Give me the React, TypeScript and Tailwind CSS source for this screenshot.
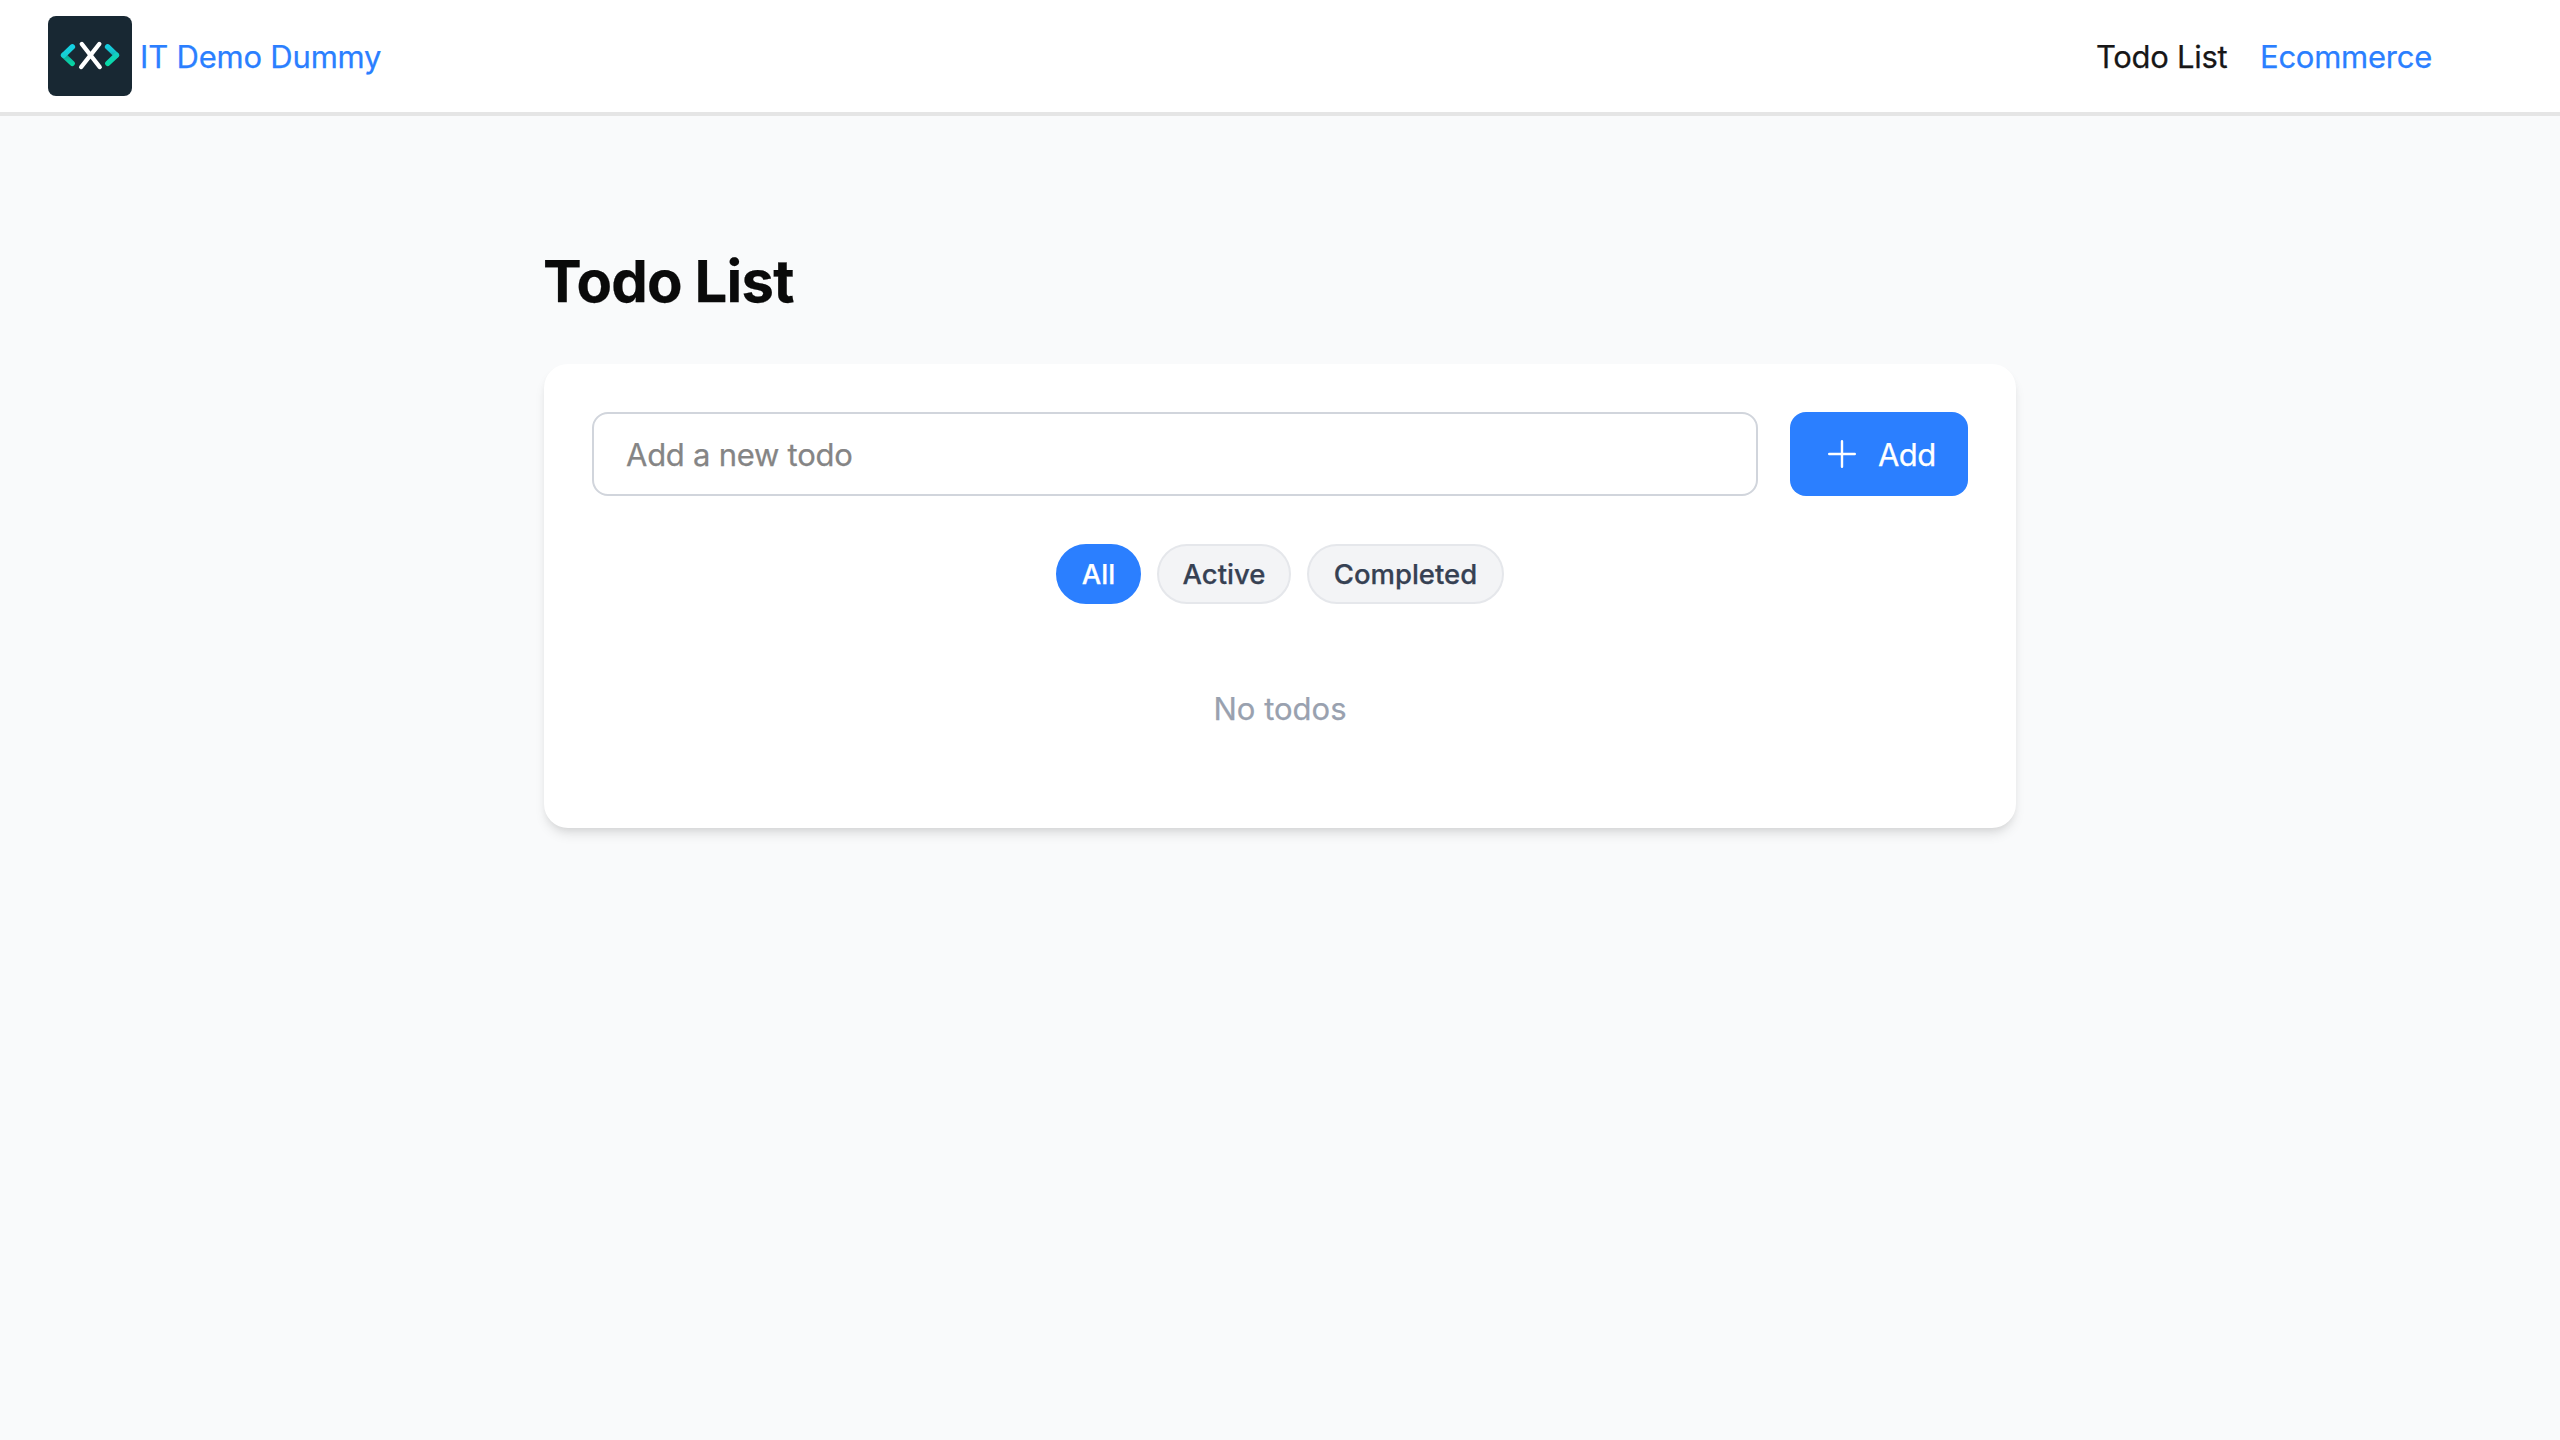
import { useState } from "react";

function Logo() {
  return (
    <svg width="84" height="80" viewBox="0 0 84 80" fill="none" strokeLinecap="round" strokeLinejoin="round">
      <defs>
        <linearGradient id="arrowLower" x1="0" y1="38" x2="0" y2="50" gradientUnits="userSpaceOnUse">
          <stop offset="0" stopColor="#0c9d96" />
          <stop offset="0.5" stopColor="#0bc3a4" />
          <stop offset="1" stopColor="#06dba2" />
        </linearGradient>
        <linearGradient id="arrowLowerRight" x1="0" y1="38" x2="0" y2="50" gradientUnits="userSpaceOnUse">
          <stop offset="0" stopColor="#14cfc0" />
          <stop offset="1" stopColor="#06dba2" />
        </linearGradient>
        <linearGradient id="arrowUpper" x1="0" y1="28" x2="0" y2="42" gradientUnits="userSpaceOnUse">
          <stop offset="0" stopColor="#14d0e6" />
          <stop offset="1" stopColor="#17cfcf" />
        </linearGradient>
        <linearGradient id="arrowUpperRight" x1="0" y1="28" x2="0" y2="42" gradientUnits="userSpaceOnUse">
          <stop offset="0" stopColor="#14d0e6" />
          <stop offset="0.5" stopColor="#14c4cf" />
          <stop offset="1" stopColor="#0f9fa3" />
        </linearGradient>
      </defs>
      <rect width="84" height="80" rx="8" fill="#182833" />
      <path d="M15.6 39.2 24.2 47.4" stroke="url(#arrowLower)" strokeWidth="5.4" />
      <path d="M24.4 30.8 15.6 39.2" stroke="url(#arrowUpper)" strokeWidth="5.4" />
      <path d="M59.6 30.8 68.4 39.2" stroke="url(#arrowUpperRight)" strokeWidth="5.4" />
      <path d="M68.4 39.2 59.8 47.4" stroke="url(#arrowLowerRight)" strokeWidth="5.4" />
      <path d="M33.8 28 51.7 51M51.3 28 33.2 51" stroke="#fff" strokeWidth="4.4" />
    </svg>
  );
}

const filters = [
  { label: "All", width: "w-[85px]" },
  { label: "Active", width: "w-[134px]" },
  { label: "Completed", width: "w-[197px]" },
];

export default function App() {
  const [filter, setFilter] = useState("All");
  return (
    <div className="min-h-screen bg-gray-50 font-['Inter',sans-serif] text-[31px] leading-[48px] text-[#0a0a0a] [-webkit-text-stroke:0.25px_currentColor]">
      <nav className="flex h-[116px] items-center justify-between border-b-4 border-[#e5e5e5] bg-white pr-32 pl-12">
        <a href="#" className="flex items-center gap-2 text-[#2b7fff]">
          <Logo />
          <span className="pt-0.5 tracking-[-0.2px]">IT Demo Dummy</span>
        </a>
        <div className="flex gap-8 pt-0.5">
          <a href="#" className="w-[132px] tracking-[-0.3px] whitespace-nowrap text-[#171717]">Todo List</a>
          <a href="#" className="w-[172px] tracking-[-0.25px] text-[#2b7fff]">Ecommerce</a>
        </div>
      </nav>

      <main className="mx-auto w-[1472px] pt-[129px]">
        <h1 className="mb-[47px] -ml-px text-[58px] leading-[72px] font-bold tracking-[-0.8px]">Todo List</h1>
        <section className="flex h-[464px] flex-col rounded-3xl bg-white p-12 shadow-[0_8px_12px_-2px_rgba(0,0,0,0.1),0_4px_8px_-4px_rgba(0,0,0,0.1)]">
          <div className="flex gap-8">
            <input
              type="text"
              placeholder="Add a new todo"
              className="h-[84px] min-w-0 flex-1 rounded-2xl border-2 border-gray-300 px-8 tracking-[-0.25px] placeholder:text-[#858585]"
            />
            <button className="flex h-[84px] w-[178px] items-center gap-4 rounded-2xl bg-[#2b7fff] px-8 tracking-[-0.6px] text-white">
              <svg className="size-10 shrink-0" viewBox="0 0 40 40" stroke="currentColor" strokeWidth="2.4" strokeLinecap="round">
                <path d="M20 7.2v25.6M7.2 20h25.6" />
              </svg>
              <span className="pt-0.5">Add</span>
            </button>
          </div>
          <div className="mt-12 flex justify-center gap-4">
            {filters.map(({ label, width }) => (
              <button
                key={label}
                onClick={() => setFilter(label)}
                className={`${width} flex h-[60px] items-center justify-center rounded-full border-2 text-[27.5px] leading-10 font-medium ${
                  filter === label
                    ? "border-[#2b7fff] bg-[#2b7fff] text-white"
                    : "border-gray-200 bg-gray-100 text-gray-700"
                }`}
              >
                {label}
              </button>
            ))}
          </div>
          <p className="mt-[81px] text-center text-gray-400">No todos</p>
        </section>
      </main>
    </div>
  );
}
